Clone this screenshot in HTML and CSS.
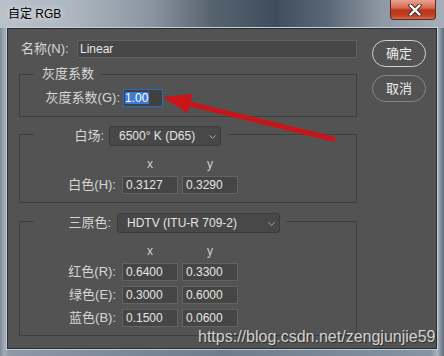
FILE: index.html
```html
<!DOCTYPE html>
<html lang="zh">
<head>
<meta charset="utf-8">
<title>自定 RGB</title>
<link rel="stylesheet" href="styles.css">
</head>
<body>
<div class="window">
  <div class="titlebar">
    <span class="title">自定 RGB</span>
    <button class="close" aria-label="关闭">
      <svg width="14" height="12" viewBox="0 0 14 12">
        <path d="M2.5 1.5 L11.5 10.5 M11.5 1.5 L2.5 10.5" stroke="#3b2b28" stroke-width="4.2" stroke-linecap="round"/>
        <path d="M2.5 1.5 L11.5 10.5 M11.5 1.5 L2.5 10.5" stroke="#ffffff" stroke-width="2.4" stroke-linecap="round"/>
      </svg>
    </button>
  </div>
  <div class="client">
    <div class="main">
      <div class="name-row">
        <span class="name-label">名称(N):</span>
        <div class="field name-field">Linear</div>
      </div>
      <fieldset class="group group-gamma">
        <legend class="legend-text">灰度系数</legend>
        <div class="gamma-row">
          <span class="row-label gamma-label">灰度系数(G):</span>
          <div class="field gamma-field"><span class="selected">1.00</span></div>
        </div>
      </fieldset>
      <fieldset class="group group-white">
        <legend class="legend-select">
          <span class="legend-label label-white">白场:</span>
          <div class="select select-white">
            <span>6500° K (D65)</span>
            <svg class="chevron" width="7" height="4" viewBox="0 0 7 4"><path d="M0.5 0.5 L3.5 3.3 L6.5 0.5" fill="none" stroke="#a8a8a8" stroke-width="1"/></svg>
          </div>
        </legend>
        <div class="coord-grid">
          <span></span><span class="axis">x</span><span class="axis">y</span>
          <span class="row-label">白色(H):</span><div class="field">0.3127</div><div class="field">0.3290</div>
        </div>
      </fieldset>
      <fieldset class="group group-primaries">
        <legend class="legend-select">
          <span class="legend-label label-primaries">三原色:</span>
          <div class="select select-primaries">
            <span>HDTV (ITU-R 709-2)</span>
            <svg class="chevron" width="7" height="4" viewBox="0 0 7 4"><path d="M0.5 0.5 L3.5 3.3 L6.5 0.5" fill="none" stroke="#a8a8a8" stroke-width="1"/></svg>
          </div>
        </legend>
        <div class="coord-grid">
          <span></span><span class="axis">x</span><span class="axis">y</span>
          <span class="row-label">红色(R):</span><div class="field">0.6400</div><div class="field">0.3300</div>
          <span class="row-label">绿色(E):</span><div class="field">0.3000</div><div class="field">0.6000</div>
          <span class="row-label">蓝色(B):</span><div class="field">0.1500</div><div class="field">0.0600</div>
        </div>
      </fieldset>
    </div>
    <div class="buttons">
      <button class="btn btn-default">确定</button>
      <button class="btn">取消</button>
    </div>
  </div>
  <svg class="arrow" width="444" height="356" viewBox="0 0 444 356">
    <line x1="188" y1="103.5" x2="335" y2="139.5" stroke="#c9151a" stroke-width="5"/>
    <polygon points="163,97 192.6,94 187.6,113.6" fill="#c9151a"/>
  </svg>
  <div class="watermark">https://blog.csdn.net/zengjunjie59</div>
</div>
</body>
</html>
```
FILE: styles.css
```css
* { box-sizing: border-box; }

body {
  margin: 0;
  background: #ffffff;
  font-family: "Liberation Sans", "Noto Sans CJK SC", sans-serif;
}

.window {
  position: relative;
  width: 444px;
  height: 356px;
  display: flex;
  flex-direction: column;
  overflow: hidden;
  background: linear-gradient(90deg, #7d8996 0%, #a3adb8 1%, #8c98a5 2%, #6f7c8b 50%, #8693a1 97%, #aab4be 98.5%, #5e6b79 100%);
}

.titlebar {
  flex: none;
  height: 28px;
  display: flex;
  align-items: flex-start;
  background: linear-gradient(90deg, #b9c1c9 0%, #aeb7c0 16%, #8995a2 34%, #56636f 48%, #3f4d5d 62%, #5b6877 74%, #8e99a5 86%, #a6afb9 100%);
}

.title {
  padding: 7px 0 0 8px;
  font-size: 12px;
  line-height: 14px;
  color: #000000;
  text-shadow: 0 0 6px rgba(255, 255, 255, 0.9);
}

.close {
  margin-left: auto;
  margin-right: 8px;
  width: 46px;
  height: 20px;
  padding: 0 0 0 3px;
  border: 1px solid #5b2a22;
  border-top: none;
  border-radius: 0 0 4px 4px;
  background: linear-gradient(#e7a592 0%, #d66b52 40%, #bb3218 55%, #c2452a 85%, #d46a50 100%);
  display: flex;
  align-items: center;
  justify-content: center;
}

.client {
  flex: none;
  height: 321px;
  margin: 0 7px;
  border: 1px solid #262c33;
  box-shadow: 0 0 0 1px #c6ced6;
  background: #535353;
  display: flex;
  gap: 15px;
  padding: 11px 10px 0 11px;
  color: #d6d6d6;
}

.main {
  width: 338px;
  display: flex;
  flex-direction: column;
}

.name-row {
  display: flex;
  height: 18px;
}

.name-label {
  width: 58px;
  padding-left: 2px;
  font-size: 13px;
  line-height: 18px;
}

.field {
  height: 18px;
  background: #454545;
  border: 1px solid #636363;
  color: #e6e6e6;
  font-size: 12px;
  line-height: 16px;
  padding: 0 3px;
  white-space: nowrap;
}

.name-field {
  flex: 1;
  padding-left: 2px;
  background: #474747;
  border-color: #606060;
}

.group {
  margin: 0;
  padding: 0;
  min-width: 0;
  border: 1px solid #3e3e3e;
}

.group-gamma {
  margin-top: 8px;
  padding: 7px 0 9px 0;
}

.legend-text {
  margin-left: 14px;
  padding: 0 6px 0 8px;
  font-size: 13px;
  line-height: 16px;
  height: 16px;
  color: #d8d8d8;
}

.gamma-row {
  display: flex;
  height: 18px;
}

.row-label {
  font-size: 13px;
  line-height: 18px;
  text-align: right;
  white-space: nowrap;
}

.gamma-label {
  width: 100px;
  margin-right: 3px;
}

.gamma-field {
  width: 40px;
  padding: 0 1px;
  background: #404040;
  border-color: #2a6bc2;
  line-height: 16px;
}

.selected {
  background: #3a7bd6;
  color: #ffffff;
  display: inline-block;
  line-height: 12px;
  padding: 0 1px 0 0;
}

.group-white {
  margin-top: 9px;
  padding: 15px 0 8px 0;
}

.group-primaries {
  margin-top: 10px;
  padding: 15px 0 8px 0;
}

.legend-select {
  margin-left: 14px;
  padding: 0;
  height: 16px;
  display: flex;
  align-items: flex-start;
}

.legend-label {
  font-size: 13px;
  line-height: 20px;
  text-align: right;
  white-space: nowrap;
}

.label-white { width: 70px; margin-right: 5px; }
.label-primaries { width: 77px; margin-right: 6px; }

.select {
  height: 20px;
  flex: none;
  display: flex;
  align-items: center;
  justify-content: space-between;
  padding: 0 4px 0 9px;
  background: #484848;
  border: 1px solid #3b3b3b;
  border-radius: 3px;
  font-size: 12px;
  color: #e4e4e4;
  white-space: nowrap;
}

.select-white { width: 112px; margin-right: 7px; }
.select-primaries { width: 163px; margin-right: 6px; }

.chevron { flex: none; margin-top: 1px; }

.coord-grid {
  display: grid;
  grid-template-columns: 98px 56px 56px;
  grid-auto-rows: 18px;
  grid-template-rows: 14px;
  column-gap: 4px;
  row-gap: 5px;
}

.coord-grid .row-label {
  padding-right: 2px;
}

.axis {
  text-align: center;
  font-size: 12px;
  line-height: 14px;
  color: #cfcfcf;
}

.buttons {
  width: 54px;
  display: flex;
  flex-direction: column;
  gap: 8px;
}

.btn {
  height: 27px;
  width: 54px;
  padding: 0;
  border: 1px solid #858585;
  border-radius: 14px;
  background: #535353;
  color: #ececec;
  font-family: "Liberation Sans", "Noto Sans CJK SC", sans-serif;
  font-size: 13px;
  line-height: 25px;
}

.btn-default {
  border-color: #d2d2d2;
}

.arrow {
  position: absolute;
  left: 0;
  top: 0;
  pointer-events: none;
}

.watermark {
  position: absolute;
  left: 198px;
  top: 328px;
  font-family: "Liberation Sans", sans-serif;
  font-size: 16px;
  line-height: 18px;
  color: rgba(232, 232, 232, 0.88);
  text-shadow: 1px 1px 1px rgba(0, 0, 0, 0.45);
  white-space: nowrap;
}
```
